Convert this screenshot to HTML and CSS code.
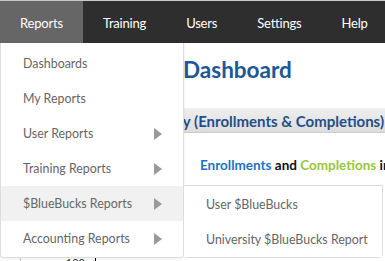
FILE: index.html
```html
<!DOCTYPE html>
<html lang="en">
<head>
    <meta charset="UTF-8">
    <meta name="viewport" content="width=device-width, initial-scale=1.0">
    <title>Reports - Dashboard</title>
    <link rel="stylesheet" href="styles.css">
</head>
<body>
    <nav class="topnav">
        <div class="nav-item active">
            Reports
            <ul class="dropdown">
                <li>Dashboards</li>
                <li>My Reports</li>
                <li class="has-sub">User Reports <span class="arrow"></span></li>
                <li class="has-sub">Training Reports <span class="arrow"></span></li>
                <li class="has-sub hover">$BlueBucks Reports <span class="arrow"></span>
                    <ul class="submenu">
                        <li>User $BlueBucks</li>
                        <li>University $BlueBucks Report</li>
                    </ul>
                </li>
                <li class="has-sub">Accounting Reports <span class="arrow"></span></li>
            </ul>
        </div>
        <div class="nav-item">Training</div>
        <div class="nav-item">Users</div>
        <div class="nav-item">Settings</div>
        <div class="nav-item">Help</div>
    </nav>

    <div class="page">
        <h1 class="title">Dashboard</h1>
        <div class="section-bar"><span>Activity Summary (Enrollments &amp; Completions)</span></div>
        <p class="legend">
            <span class="enr">Enrollments</span> and <span class="comp">Completions</span> in the last 30 days
        </p>
        <div class="chart">
            <span class="tick">100</span>
            <div class="axis"></div>
        </div>
    </div>
</body>
</html>
```

FILE: styles.css
```css
body {
    margin: 0;
    font-family: Lato, "Open Sans", Arial, sans-serif;
    background: #fff;
    color: #333;
    overflow: hidden;
}

.topnav {
    display: flex;
    height: 43px;
    background-color: #2e2e2e;
    border-top: 1px solid #c8c8c8;
    box-sizing: border-box;
    position: relative;
    z-index: 5;
}

.nav-item {
    position: relative;
    padding: 3px 20px 0;
    line-height: 39px;
    font-size: 13px;
    letter-spacing: -0.2px;
    color: #fff;
    white-space: nowrap;
}

.nav-item.active {
    background-color: #666;
}

.dropdown {
    position: absolute;
    top: 42px;
    left: 0;
    width: 182px;
    margin: 0;
    padding: 3px 0 1px;
    list-style: none;
    background: #fff;
    border: 1px solid #ddd;
    border-top: none;
    border-radius: 0 0 4px 4px;
    box-shadow: 0 1px 3px rgba(0, 0, 0, 0.08);
    letter-spacing: 0;
}

.dropdown li {
    position: relative;
    display: flex;
    align-items: center;
    height: 35px;
    padding: 0 21px 0 22px;
    font-size: 12.4px;
    line-height: 35px;
    color: #666;
    white-space: nowrap;
}

.dropdown li.hover {
    background-color: #f1f1f1;
}

.arrow {
    margin-left: auto;
    width: 0;
    height: 0;
    border-top: 6px solid transparent;
    border-bottom: 6px solid transparent;
    border-left: 8px solid #999;
}

.submenu {
    position: absolute;
    top: -1px;
    left: 182px;
    width: 198px;
    margin: 0;
    padding: 1px 0 0;
    list-style: none;
    background: #fff;
    border: 1px solid #ddd;
    border-radius: 0 0 4px 4px;
}

.dropdown .submenu li {
    padding: 0 22px;
    background: #fff;
}

.page {
    padding: 0 0 0 183px;
}

.title {
    margin: 12px 0 0;
    font-size: 22.5px;
    font-weight: bold;
    color: #1c5796;
    line-height: 30px;
}

.section-bar {
    display: flex;
    justify-content: flex-end;
    margin: 23px 0 0 -75px;
    padding-right: 1px;
    height: 24px;
    line-height: 26px;
    white-space: nowrap;
    overflow: hidden;
    background: linear-gradient(#efefef, #dcdcdc);
    border-bottom: 1px solid #ccc;
    font-size: 15px;
    font-weight: bold;
    color: #1f4f8a;
}

.legend {
    margin: 23px 0 0 17px;
    line-height: 18px;
    white-space: nowrap;
    font-size: 13.5px;
    font-weight: bold;
    color: #111;
}

.enr {
    color: #1a73c9;
}

.comp {
    color: #95c83d;
}

.chart {
    display: flex;
    margin: 79px 0 0 -163px;
    height: 40px;
    border-left: 1px solid #ccc;
}

.tick {
    width: 64px;
    padding-top: 3px;
    text-align: right;
    font-size: 11px;
    line-height: 13px;
    color: #333;
}

.axis {
    margin-left: 10px;
    border-left: 1px solid #000;
}
```
